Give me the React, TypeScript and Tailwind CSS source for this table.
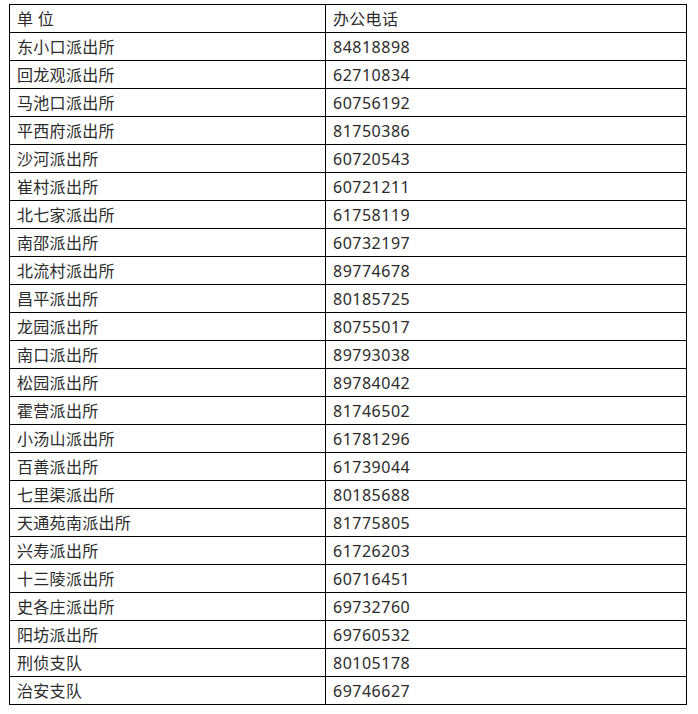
const rows: [string, string][] = [
  ["东小口派出所", "84818898"],
  ["回龙观派出所", "62710834"],
  ["马池口派出所", "60756192"],
  ["平西府派出所", "81750386"],
  ["沙河派出所", "60720543"],
  ["崔村派出所", "60721211"],
  ["北七家派出所", "61758119"],
  ["南邵派出所", "60732197"],
  ["北流村派出所", "89774678"],
  ["昌平派出所", "80185725"],
  ["龙园派出所", "80755017"],
  ["南口派出所", "89793038"],
  ["松园派出所", "89784042"],
  ["霍营派出所", "81746502"],
  ["小汤山派出所", "61781296"],
  ["百善派出所", "61739044"],
  ["七里渠派出所", "80185688"],
  ["天通苑南派出所", "81775805"],
  ["兴寿派出所", "61726203"],
  ["十三陵派出所", "60716451"],
  ["史各庄派出所", "69732760"],
  ["阳坊派出所", "69760532"],
  ["刑侦支队", "80105178"],
  ["治安支队", "69746627"],
];

export default function App() {
  return (
    <div className="min-h-screen bg-white pt-[4px] pl-[9px] font-['Noto_Sans','Noto_Sans_CJK_SC',sans-serif] text-[16px] text-[#2b2b2b]">
      <table className="border-collapse">
        <tbody>
          <tr className="h-[28px]">
            <td className="w-[316px] border border-black px-[7px] py-0 leading-[20px] tracking-[0.3px]">单 位</td>
            <td className="w-[361px] border border-black px-[7px] py-0 leading-[20px] tracking-[0.3px]">办公电话</td>
          </tr>
          {rows.map(([name, tel]) => (
            <tr key={name} className="h-[28px]">
              <td className="border border-black px-[7px] py-0 leading-[20px] tracking-[0.3px]">{name}</td>
              <td className="border border-black px-[7px] py-0 leading-[20px] tracking-[0.5px]">{tel}</td>
            </tr>
          ))}
        </tbody>
      </table>
    </div>
  );
}
